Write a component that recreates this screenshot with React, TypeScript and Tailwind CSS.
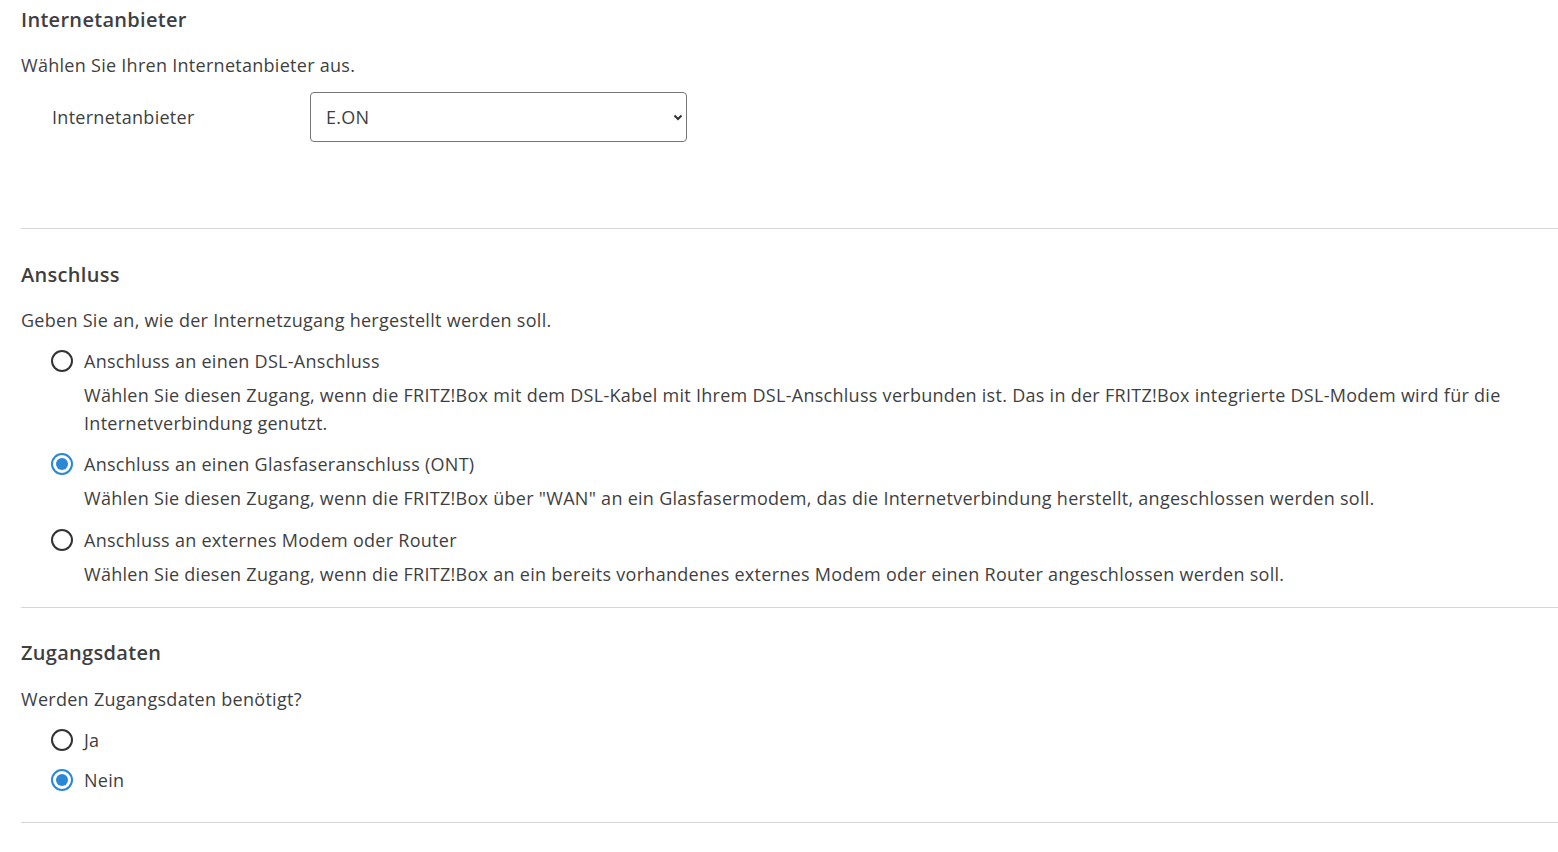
import { useState } from 'react';

const FONT = "font-['Open_Sans','Noto_Sans',sans-serif]";

function Radio({ checked, label, onSelect }: { checked: boolean; label: string; onSelect: () => void }) {
  return (
    <label className="flex items-center h-[28px] cursor-pointer" onClick={onSelect}>
      <span
        className={`flex-shrink-0 w-[22px] h-[22px] rounded-full border-2 flex items-center justify-center ${
          checked ? 'border-[#2a87d6]' : 'border-[#333333]'
        }`}
      >
        {checked && <span className="w-[12px] h-[12px] rounded-full bg-[#2a87d6]" />}
      </span>
      <span className="ml-[11px]">{label}</span>
    </label>
  );
}

const ANSCHLUSS = [
  {
    id: 'dsl',
    label: 'Anschluss an einen DSL-Anschluss',
    desc: 'Wählen Sie diesen Zugang, wenn die FRITZ!Box mit dem DSL-Kabel mit Ihrem DSL-Anschluss verbunden ist. Das in der FRITZ!Box integrierte DSL-Modem wird für die Internetverbindung genutzt.',
  },
  {
    id: 'ont',
    label: 'Anschluss an einen Glasfaseranschluss (ONT)',
    desc: 'Wählen Sie diesen Zugang, wenn die FRITZ!Box über "WAN" an ein Glasfasermodem, das die Internetverbindung herstellt, angeschlossen werden soll.',
  },
  {
    id: 'ext',
    label: 'Anschluss an externes Modem oder Router',
    desc: 'Wählen Sie diesen Zugang, wenn die FRITZ!Box an ein bereits vorhandenes externes Modem oder einen Router angeschlossen werden soll.',
  },
];

export default function App() {
  const [anschluss, setAnschluss] = useState('ont');
  const [zugang, setZugang] = useState<'ja' | 'nein'>('nein');

  return (
    <div className={`${FONT} bg-white text-[#3f3f3f] text-[18px] tracking-[0.28px] leading-[28px] pl-[21px] min-h-screen`}>
      {/* Internetanbieter */}
      <section className="pt-[6px] pb-[86px] border-b border-[#d5d5d5]">
        <h2 className="text-[20px] font-semibold leading-[28px] tracking-[0.3px]">Internetanbieter</h2>
        <p className="mt-[17px]">Wählen Sie Ihren Internetanbieter aus.</p>
        <div className="mt-[13px] flex items-center pl-[31px]">
          <span className="w-[258px]">Internetanbieter</span>
          <div className="relative w-[377px]">
            <select
              defaultValue="E.ON"
              className="appearance-none w-full h-[50px] border border-[#767676] rounded-[4px] bg-white pl-[15px] pr-8 text-[18px] tracking-[0.28px] text-[#3f3f3f] outline-none"
            >
              <option>E.ON</option>
              <option>1&amp;1</option>
              <option>Telekom</option>
              <option>Vodafone</option>
              <option>anderer Internetanbieter</option>
            </select>
            <svg
              className="absolute right-[2px] top-1/2 -translate-y-1/2 pointer-events-none"
              width="14"
              height="14"
              viewBox="0 0 14 14"
            >
              <path d="M3.5 5.5 L7 9 L10.5 5.5" fill="none" stroke="#333" strokeWidth="2" />
            </svg>
          </div>
        </div>
      </section>

      {/* Anschluss */}
      <section className="pt-[32px] pb-[19px] border-b border-[#d5d5d5]">
        <h2 className="text-[20px] font-semibold leading-[28px] tracking-[0.3px]">Anschluss</h2>
        <p className="mt-[17px]">Geben Sie an, wie der Internetzugang hergestellt werden soll.</p>
        <div className="pl-[30px]">
          {ANSCHLUSS.map((a, i) => (
            <div key={a.id} className={i === 2 ? 'mt-[14px]' : 'mt-[13px]'}>
              <Radio checked={anschluss === a.id} label={a.label} onSelect={() => setAnschluss(a.id)} />
              <p className="mt-[6px] pl-[33px]">{a.desc}</p>
            </div>
          ))}
        </div>
      </section>

      {/* Zugangsdaten */}
      <section className="pt-[31px] pb-[28px] border-b border-[#d5d5d5]">
        <h2 className="text-[20px] font-semibold leading-[28px] tracking-[0.3px]">Zugangsdaten</h2>
        <p className="mt-[18px]">Werden Zugangsdaten benötigt?</p>
        <div className="pl-[30px] mt-[13px] flex flex-col gap-[12px]">
          <Radio checked={zugang === 'ja'} label="Ja" onSelect={() => setZugang('ja')} />
          <Radio checked={zugang === 'nein'} label="Nein" onSelect={() => setZugang('nein')} />
        </div>
      </section>
    </div>
  );
}
